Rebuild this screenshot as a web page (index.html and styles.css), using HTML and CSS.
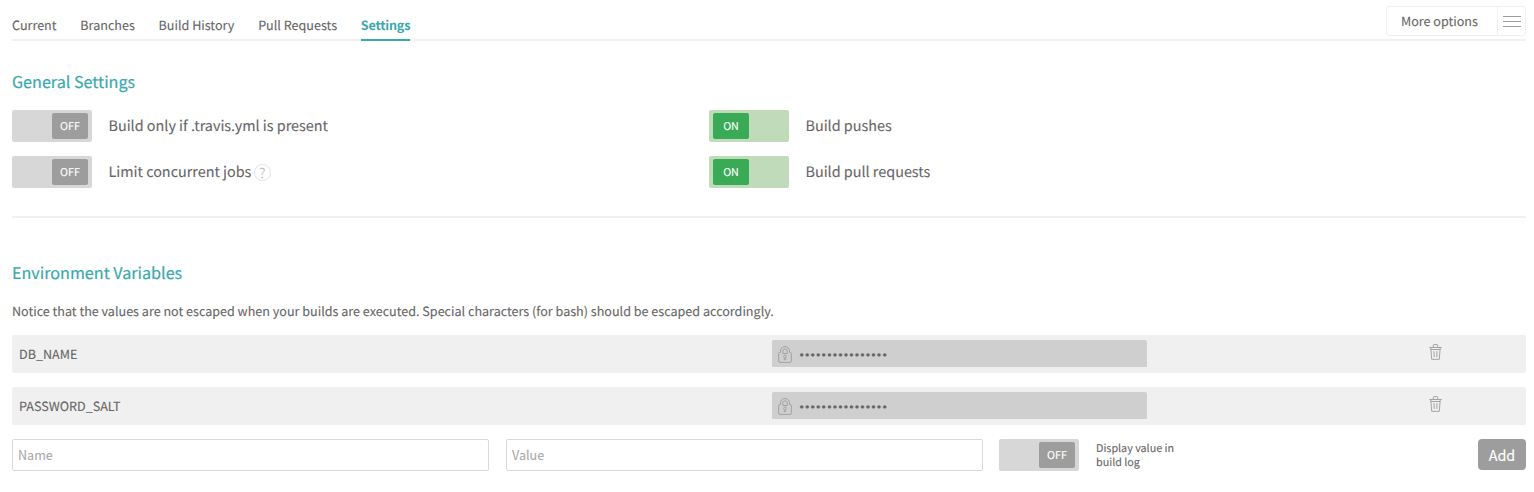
FILE: index.html
```html
<!DOCTYPE html>
<html lang="en">
<head>
<meta charset="utf-8">
<title>Settings</title>
<link rel="stylesheet" href="styles.css">
</head>
<body>
<svg class="sprite" aria-hidden="true">
  <symbol id="lock" viewBox="0 0 14 17">
    <path d="M2.500 6.500V5a4.500 4.500 0 0 1 9 0v1.500M4.800 7.500V5a2.200 2.200 0 0 1 4.400 0v2.500H4.800"/>
    <path d="M2.500 6.500H1.800Q.6 6.500.6 7.700V15q0 1.400 1.400 1.400h10q1.400 0 1.400-1.400V7.700q0-1.200-1.200-1.200h-.7"/>
    <path d="M7 9a1.300 1.300 0 0 1 .8 2.300L7.600 13.800H6.400L6.200 11.300A1.300 1.300 0 0 1 7 9z"/>
  </symbol>
  <symbol id="trash" viewBox="0 0 13 16">
    <path d="M.3 3.500h12.400M4.300 3.200V1.300q0-.7.7-.7h3q.7 0 .7.700v1.900M1.800 3.900l.9 11.400h7.600l.9-11.400M1.600 5.500h9.800M5 7.200l.2 5.800M8 7.200L7.800 13"/>
  </symbol>
</svg>
<header class="tabbar">
  <nav class="tabs">
    <a class="tab">Current</a>
    <a class="tab">Branches</a>
    <a class="tab">Build History</a>
    <a class="tab">Pull Requests</a>
    <a class="tab tab-active">Settings</a>
  </nav>
  <div class="more">
    <span class="more-label">More options</span>
    <span class="more-icon"><svg width="18" height="11" viewBox="0 0 18 11"><path d="M0 .5h18M0 5.500h18M0 10.500h18"/></svg></span>
  </div>
</header>
<main>
  <section class="general">
    <h2 class="title">General Settings</h2>
    <div class="switches">
      <div class="setting"><span class="switch"><span class="knob">OFF</span></span><span class="setting-label">Build only if .travis.yml is present</span></div>
      <div class="setting"><span class="switch switch-on"><span class="knob">ON</span></span><span class="setting-label">Build pushes</span></div>
      <div class="setting"><span class="switch"><span class="knob">OFF</span></span><span class="setting-label">Limit concurrent jobs</span><span class="help">?</span></div>
      <div class="setting"><span class="switch switch-on"><span class="knob">ON</span></span><span class="setting-label">Build pull requests</span></div>
    </div>
  </section>
  <section class="env">
    <h2 class="title">Environment Variables</h2>
    <p class="notice">Notice that the values are not escaped when your builds are executed. Special characters (for bash) should be escaped accordingly.</p>
    <div class="var">
      <span class="var-name">DB_NAME</span>
      <span class="var-value"><svg class="lock"><use href="#lock"/></svg><span class="dots">••••••••••••••••</span></span>
      <svg class="trash"><use href="#trash"/></svg>
    </div>
    <div class="var">
      <span class="var-name">PASSWORD_SALT</span>
      <span class="var-value"><svg class="lock"><use href="#lock"/></svg><span class="dots">••••••••••••••••</span></span>
      <svg class="trash"><use href="#trash"/></svg>
    </div>
    <form class="add-form">
      <input class="field" placeholder="Name">
      <input class="field" placeholder="Value">
      <span class="switch"><span class="knob">OFF</span></span>
      <span class="log-label">Display value in<br>build log</span>
      <button class="add" type="button">Add</button>
    </form>
  </section>
</main>
</body>
</html>
```
FILE: styles.css
```css
* { box-sizing: border-box; }
body {
  margin: 0;
  padding: 0 8px 0 12px;
  background: #fff;
  color: #666;
  font-family: "Noto Sans CJK SC", "Noto Sans", sans-serif;
  font-size: 12.58px;
  text-rendering: geometricPrecision;
  -webkit-text-stroke: 0.1px;
}
.sprite { position: absolute; width: 0; height: 0; }
svg { fill: none; stroke: #9d9d9d; }

.tabbar { display: flex; justify-content: space-between; height: 41px; border-bottom: 2px solid #f1f1f1; }
.tabs { display: flex; gap: 23.8px; height: 41px; }
.tab { padding-top: 15px; line-height: 20px; height: 41px; white-space: nowrap; }
.tab-active { color: #39a9ad; font-weight: 700; letter-spacing: -0.2px; border-bottom: 2px solid #39a9ad; -webkit-text-stroke: 0; }
.more { display: flex; width: 140px; height: 30px; margin-top: 6px; border: 1px solid #f1f1f1; border-radius: 3px; }
.more-label { flex: 1; padding-left: 14px; line-height: 28px; }
.more-icon { display: flex; align-items: center; justify-content: flex-end; width: 28px; padding: 1px 4px 0 0; border-left: 1px solid #f1f1f1; }

.title { margin: 0; color: #39a9ad; font-size: 16.15px; font-weight: 400; line-height: 24px; -webkit-text-stroke: 0.2px; }
.general { padding-top: 28px; height: 177px; border-bottom: 2px solid #f1f1f1; }
.switches { display: grid; grid-template-columns: 697px 1fr; row-gap: 14px; margin-top: 17px; }
.setting { display: flex; align-items: center; height: 32px; }
.setting-label { margin-left: 16.5px; font-size: 14.38px; line-height: 24px; white-space: nowrap; }
.switch { display: flex; justify-content: flex-end; width: 80px; height: 32px; padding: 3px 4px; border-radius: 2px; background: #d7d7d7; }
.switch-on { justify-content: flex-start; background: #bfdbba; }
.knob { width: 36px; height: 26px; border-radius: 2px; background: #9d9d9d; color: #fff; font-size: 10.75px; line-height: 27px; text-align: center; }
.switch-on .knob { background: #39aa56; }
.help { width: 17px; height: 17px; margin-left: 2.5px; border: 1px solid #e3e3e3; border-radius: 50%; color: #aaa; font-size: 13.5px; font-weight: 300; line-height: 14px; text-align: center; -webkit-text-stroke: 0; }

.env { padding-top: 42px; }
.notice { margin: 17px 0 14px; line-height: 20px; }
.var { display: grid; grid-template-columns: 760px 375px 282px 1fr; height: 38px; margin-bottom: 14px; border-radius: 2px; background: #f0f0f0; }
.var-name { padding-left: 7px; line-height: 38px; }
.var-value { display: flex; height: 27px; margin-top: 5px; padding-left: 6px; border-radius: 2px 2px 0 0; background: #cfcfcf; }
.var svg { stroke: #a3a3a3; }
.lock { width: 14px; height: 17px; margin-top: 6px; }
.dots { margin-left: 7.5px; font-family: "Liberation Sans", sans-serif; font-size: 12.5px; letter-spacing: 1.15px; line-height: 30px; -webkit-text-stroke: 0; }
.trash { grid-column: 4; width: 13px; height: 16px; margin-top: 9px; }

.add-form { display: flex; }
.field { width: 477px; height: 32px; margin: 0 17px 0 0; padding: 0 5px 1px; border: 1px solid #d9d9d9; border-radius: 2px; color: #666; font: inherit; }
.field + .switch { margin-left: -1px; }
.field::placeholder { color: #a9a9a9; }
.log-label { margin-left: 17px; padding-top: 3px; font-size: 10.75px; line-height: 14px; }
.add { width: 48px; height: 31px; margin-left: auto; padding: 0; border: 0; border-radius: 4px; background: #9d9d9d; color: #fff; font: inherit; font-size: 14.36px; }
```
